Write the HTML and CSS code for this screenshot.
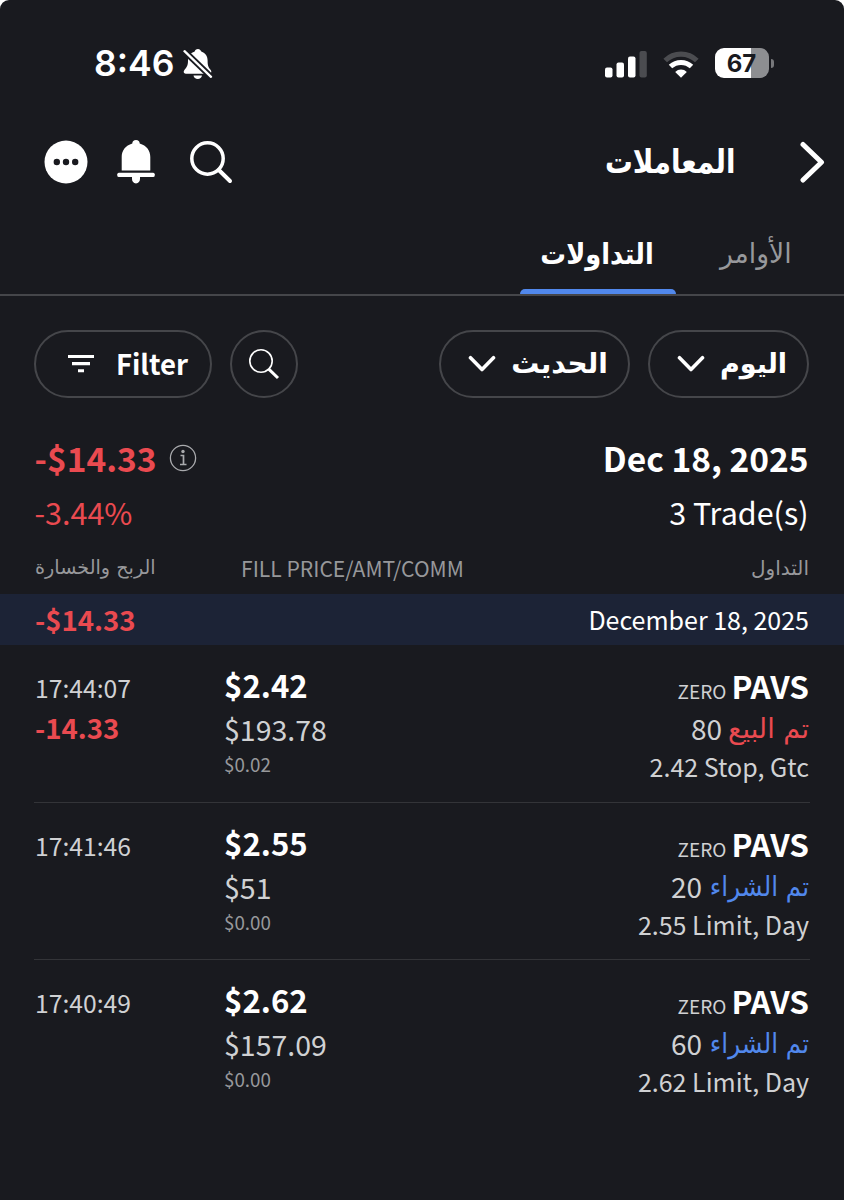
FILE: index.html
```html
<!DOCTYPE html>
<html lang="ar">
<head>
<meta charset="utf-8">
<title>المعاملات</title>
<link rel="stylesheet" href="styles.css">
</head>
<body>
<main class="screen">
  <header class="status">
    <div class="status-time"><span class="clock">8:46</span>
      <svg class="mute" width="30" height="32" viewBox="0 0 30 32"><path d="M15 1c-1.900 0-3 1.200-3.300 2.500C7 5 5 8.500 5 12.500c0 5.500-1.500 6.800-3.600 9.500-1.300 1.700-.5 3.700 1.300 3.700h23.600c1.800 0 2.700-2 1.400-3.700-2.200-2.700-3.100-4-3.100-9.500 0-4-2-7.500-6.300-9C17.500 2.200 16.700 1 15 1zM10.500 27.500h8.500c-.4 2.200-2 3.500-4.200 3.500s-4-1.300-4.300-3.500z" fill="#fff"/><path d="M1.500 3.200l26.500 25.600" stroke="#191a1f" stroke-width="6"/><path d="M1.500 3.200l26.500 25.600" stroke="#fff" stroke-width="2.300" stroke-linecap="round"/></svg>
    </div>
    <div class="status-icons">
      <svg width="42" height="27" viewBox="0 0 42 27"><g fill="#fff"><rect x="0" y="16.500" width="7.500" height="10" rx="2"/><rect x="11.500" y="11.500" width="7.500" height="15" rx="2"/><rect x="23" y="5.500" width="7.500" height="21" rx="2"/></g><rect x="34.500" y="0" width="7.300" height="26.500" rx="2" fill="#4b4c50"/></svg>
      <svg class="wifi" width="36" height="27" viewBox="0 0 36 27"><path d="M2.200 9.500C11 1 25 1 33.800 9.500" fill="none" stroke="#4b4c50" stroke-width="5.200"/><path d="M7.500 15.500c6-5.500 15-5.500 21 0" fill="none" stroke="#fff" stroke-width="5"/><path d="M12.200 21c3.200-3.300 8.400-3.300 11.600 0L18 26.800z" fill="#fff"/></svg>
      <div class="battery"><div class="battery-body">67</div><div class="battery-tip"></div></div>
    </div>
  </header>

  <nav class="topbar">
    <div class="tools">
      <svg width="44" height="44" viewBox="0 0 44 44"><circle cx="22" cy="22" r="21.500" fill="#fff"/><g fill="#191a1f"><circle cx="12.800" cy="22" r="3.200"/><circle cx="22" cy="22" r="3.200"/><circle cx="31.200" cy="22" r="3.200"/></g></svg>
      <svg width="38" height="44" viewBox="0 0 38 44"><path d="M19 0c-2.300 0-3.700 1.500-3.700 3.500C8.500 5.500 4.700 10.500 4.700 17v13.500h28.600V17c0-6.500-3.800-11.500-10.600-13.500C22.700 1.500 21.300 0 19 0zM15 36.500h8v2.500c0 2.300-1.500 4.500-4 4.500s-4-2.200-4-4.500z" fill="#fff"/><rect x=".3" y="32.800" width="37.400" height="4.200" rx="1.500" fill="#fff"/></svg>
      <svg width="44" height="44" viewBox="0 0 44 44" fill="none" stroke="#fff"><circle cx="18.500" cy="18.500" r="15.700" stroke-width="3.500"/><path d="M29.800 30L41 41" stroke-width="4" stroke-linecap="round"/></svg>
    </div>
    <div class="heading">
      <h1 class="ar title" dir="rtl">المعاملات</h1>
      <svg width="26" height="44" viewBox="0 0 26 44"><path d="M3 4.500L21.500 22.300 3 40" fill="none" stroke="#fff" stroke-width="5" stroke-linecap="round" stroke-linejoin="round"/></svg>
    </div>
  </nav>

  <div class="tabs">
    <div class="tab active"><span class="ar tab-on" dir="rtl">التداولات</span></div>
    <div class="tab"><span class="ar tab-off" dir="rtl">الأوامر</span></div>
  </div>

  <div class="filters">
    <div class="pill filter"><svg width="26" height="18" viewBox="0 0 26 18" fill="#fff"><path d="M0 0h26v3H0zM4 7h18v3.200H4zM10 14.200h6v3h-6z"/></svg><span>Filter</span></div>
    <div class="pill round"><svg width="32" height="32" viewBox="0 0 32 32" fill="none" stroke="#fff"><circle cx="13" cy="13" r="11.200" stroke-width="1.600"/><path d="M20.500 20.800L30 30" stroke-width="3"/></svg></div>
    <div class="pill newest"><svg width="28" height="18" viewBox="0 0 28 18"><path d="M2.500 2.700L14 14.500 25.500 2.700" fill="none" stroke="#fff" stroke-width="3.600" stroke-linecap="round" stroke-linejoin="round"/></svg><span class="ar" dir="rtl">الحديث</span></div>
    <div class="pill today"><svg width="28" height="18" viewBox="0 0 28 18"><path d="M2.500 2.700L14 14.500 25.500 2.700" fill="none" stroke="#fff" stroke-width="3.600" stroke-linecap="round" stroke-linejoin="round"/></svg><span class="ar" dir="rtl">اليوم</span></div>
  </div>

  <section class="summary">
    <div class="sum-main"><div class="sum-loss"><b class="loss">-$14.33</b><svg width="28" height="28" viewBox="0 0 28 28" fill="none" stroke="#a9aaad"><circle cx="14" cy="14" r="12.600" stroke-width="1.300"/><path d="M11.500 11.500h3v9M11 20.500h6.500" stroke-width="1.700"/><circle cx="14" cy="7.500" r="1.700" fill="#a9aaad" stroke="none"/></svg></div><b class="date">Dec 18, 2025</b></div>
    <div class="sum-sub"><span class="loss pct">-3.44%</span><span class="count">3 Trade(s)</span></div>
  </section>

  <div class="columns"><span class="ar col-pl" dir="rtl">الربح والخسارة</span><span class="col-fill">FILL PRICE/AMT/COMM</span><span class="ar col-trade" dir="rtl">التداول</span></div>
  <div class="day"><b class="loss">-$14.33</b><span class="day-date">December 18, 2025</span></div>

  <article class="trade">
    <div class="when"><div class="time">17:44:07</div><div class="pnl loss">-14.33</div></div>
    <div class="fill"><div class="price">$2.42</div><div class="amount">$193.78</div><div class="comm">$0.02</div></div>
    <div class="order"><div class="sym"><span>ZERO</span><b>PAVS</b></div><div class="qty"><span>80</span><span class="ar sell" dir="rtl">تم البيع</span></div><div class="kind">2.42 Stop, Gtc</div></div>
  </article>
  <article class="trade">
    <div class="when"><div class="time">17:41:46</div></div>
    <div class="fill"><div class="price">$2.55</div><div class="amount">$51</div><div class="comm">$0.00</div></div>
    <div class="order"><div class="sym"><span>ZERO</span><b>PAVS</b></div><div class="qty"><span>20</span><span class="ar buy" dir="rtl">تم الشراء</span></div><div class="kind">2.55 Limit, Day</div></div>
  </article>
  <article class="trade">
    <div class="when"><div class="time">17:40:49</div></div>
    <div class="fill"><div class="price">$2.62</div><div class="amount">$157.09</div><div class="comm">$0.00</div></div>
    <div class="order"><div class="sym"><span>ZERO</span><b>PAVS</b></div><div class="qty"><span>60</span><span class="ar buy" dir="rtl">تم الشراء</span></div><div class="kind">2.62 Limit, Day</div></div>
  </article>
</main>
</body>
</html>
```
FILE: styles.css
```css
* { box-sizing: border-box; }
body { margin: 0; background: #fff; }
svg { display: block; flex: none; }
.screen { width: 844px; height: 1200px; background: #191a1f; border-radius: 9px 9px 0 0; overflow: hidden; color: #fff; font-family: "Noto Sans CJK SC", "DejaVu Sans", sans-serif; white-space: nowrap; }
.ar { display: block; font-family: "DejaVu Sans", sans-serif; }
.loss { color: #ea4a50; }

.status { display: flex; justify-content: space-between; height: 126px; padding: 1px 70px 0 94px; align-items: center; }
.status-time { display: flex; align-items: center; gap: 9px; }
.clock { font: 600 35.500px/40px Inter, sans-serif; }
.status-icons { display: flex; align-items: center; gap: 16px; padding-top: 2px; }
.battery { display: flex; align-items: center; gap: 2px; margin-top: -3px; }
.battery-body { width: 54px; height: 30px; border-radius: 9px; background: linear-gradient(90deg, #fff 67%, #8d8e91 67%); color: #191a1f; font: 700 24px/31px Inter, sans-serif; text-align: center; padding-right: 1px; }
.battery-tip { width: 3px; height: 9px; border-radius: 0 4px 4px 0; background: #77787b; }

.topbar { display: flex; justify-content: space-between; align-items: center; height: 72px; padding: 0 18px 1px 44px; }
.tools { display: flex; gap: 29px; align-items: center; }
.tools svg:last-child { margin-left: 5px; }
.heading { display: flex; align-items: center; gap: 65px; }
.title { margin: 0; font-size: 33px; line-height: 44px; font-weight: 700; transform: scaleX(.84); transform-origin: right; }

.tabs { display: flex; justify-content: flex-end; height: 98px; border-bottom: 2px solid #45464a; padding-right: 14px; }
.tab { display: flex; justify-content: center; width: 154px; height: 96px; padding-top: 36px; font-size: 28px; line-height: 40px; }
.tab.active { width: 156px; position: relative; font-size: 29px; font-weight: 700; }
.tab.active::after { content: ""; position: absolute; left: 0; bottom: 0; width: 156px; height: 5px; background: #5188ec; border-radius: 5px 5px 0 0; }
.tab-on { transform: translateX(-1px) scaleX(.885); }
.tab-off { color: #97989b; transform: translateX(3px) scaleX(.95); }

.filters { display: flex; gap: 18px; padding: 34px 34px 0; height: 135px; }
.pill { height: 68px; border: 2px solid #45464a; border-radius: 34px; display: flex; align-items: center; justify-content: center; font-weight: 700; font-size: 27px; line-height: 40px; }
.filter { width: 178px; gap: 22px; font-size: 27.500px; padding-left: 10px; }
.filter span { margin-top: -2px; }
.round { width: 68px; }
.newest { width: 191px; margin-left: 123px; gap: 15px; padding-left: 7px; font-size: 28px; }
.today { width: 161px; gap: 15px; padding-left: 7px; }

.summary { padding: 0 35.500px 0 34.500px; }
.sum-main, .sum-sub { display: flex; justify-content: space-between; align-items: center; }
.sum-main { height: 53px; font-size: 33.500px; line-height: 51px; }
.sum-loss { display: flex; align-items: center; gap: 12px; }
.sum-sub { height: 55px; font-size: 30.500px; line-height: 54px; }

.columns { display: grid; grid-template-columns: 206px 1fr auto; height: 55px; padding: 0 35px; line-height: 58px; color: #97989b; font-size: 21.100px; }
.columns .ar { font-size: 19.200px; }
.columns .col-pl { justify-self: start; }
.columns .col-trade { font-size: 20px; }
.day { height: 51px; background: #1c2336; display: flex; justify-content: space-between; align-items: center; padding: 0 35px 2px; font-size: 27.600px; line-height: 48px; }
.day-date { font-size: 25px; }

.trade { display: grid; grid-template-columns: 189px 1fr auto; height: 157.700px; margin: 0 34px; padding: 17px 1px 0 1px; border-bottom: 1px solid #333438; }
.trade:last-child { border: 0; }
.time { font-size: 24.700px; line-height: 50px; color: #d0d1d3; }
.pnl { font-size: 27.600px; line-height: 31px; font-weight: 700; }
.price { font-size: 31.200px; line-height: 46px; font-weight: 700; }
.amount { font-size: 28.500px; line-height: 41px; color: #d0d1d3; }
.comm { font-size: 18.800px; line-height: 29px; color: #97989b; }
.order { color: #d0d1d3; text-align: right; }
.sym { display: flex; justify-content: flex-end; align-items: baseline; gap: 5px; height: 46px; line-height: 46px; font-size: 19px; }
.sym b { color: #fff; font-size: 31.500px; }
.qty { display: flex; justify-content: flex-end; gap: 6px; height: 41px; font-size: 28px; line-height: 41px; }
.kind { font-size: 25px; line-height: 35px; }
.sell { color: #ea4a50; font-size: 27.200px; }
.buy { color: #5188ec; font-size: 27px; transform: scaleX(.91); transform-origin: right; margin-left: -8px; }
```
